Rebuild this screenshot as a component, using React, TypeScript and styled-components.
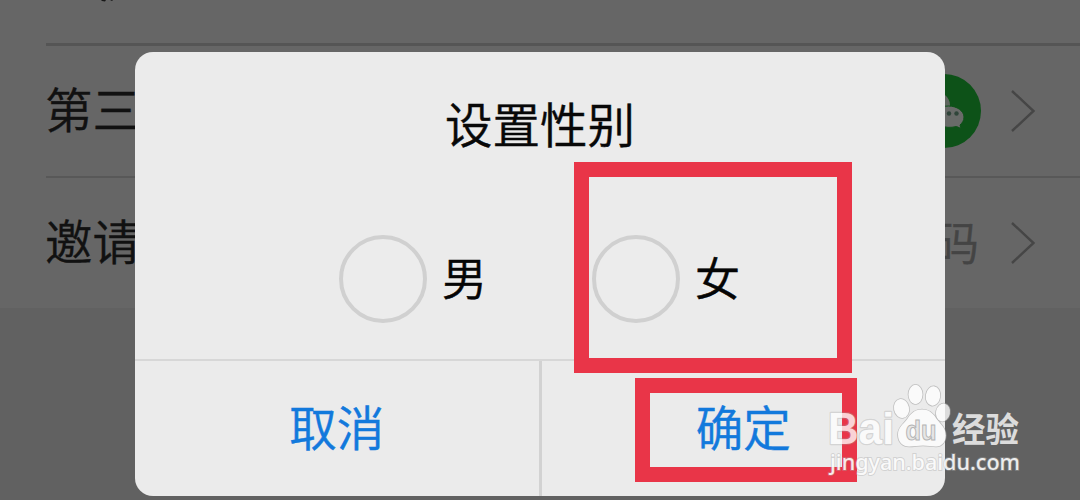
import React from "react";
import styled, { createGlobalStyle } from "styled-components";

const GlobalStyle = createGlobalStyle`
  * { box-sizing: border-box; }
  body {
    margin: 0;
    font-family: "Noto Sans CJK SC", sans-serif;
  }
`;

const Screen = styled.div`
  position: relative;
  width: 1080px;
  height: 500px;
  overflow: hidden;
  background: #616161;
`;

const SettingsList = styled.div`
  display: flex;
  flex-direction: column;
  background: #666666;
`;

const Row = styled.div<{ $height: number }>`
  display: flex;
  align-items: center;
  justify-content: space-between;
  height: ${(p) => p.$height}px;
  padding: 0 44px 0 45px;
`;

const PreviousRow = styled(Row)`
  align-items: flex-start;
  padding-left: 101px;
`;

const Divider = styled.div<{ $thickness: number; $color: string }>`
  height: ${(p) => p.$thickness}px;
  margin-left: 46px;
  background: ${(p) => p.$color};
`;

const RowLabel = styled.span`
  padding-bottom: 7px;
  font-size: 47.5px;
  line-height: 60px;
  font-weight: 350;
  -webkit-text-stroke: 0.4px currentColor;
  color: #111111;
`;

const RowValue = styled.div`
  display: flex;
  align-items: center;
  gap: 29px;
`;

const Hint = styled.span`
  padding-bottom: 6px;
  margin-right: 2px;
  font-size: 46px;
  line-height: 60px;
  font-weight: 350;
  -webkit-text-stroke: 0.5px currentColor;
  color: #444444;
`;

const Dialog = styled.section`
  position: absolute;
  top: 52px;
  left: 135px;
  display: flex;
  flex-direction: column;
  width: 810px;
  height: 444px;
  border-radius: 18px;
  background: #ebebeb;
  overflow: hidden;
`;

const DialogBody = styled.div`
  flex: 1;
  display: flex;
  flex-direction: column;
  align-items: center;
`;

const Title = styled.h1`
  margin: 35px 0 0;
  font-size: 47.5px;
  line-height: 72px;
  font-weight: 350;
  -webkit-text-stroke: 0.5px currentColor;
  color: #080808;
`;

const Options = styled.div`
  display: flex;
  align-self: stretch;
  padding: 75px 0 0 204px;
`;

const Option = styled.label`
  display: flex;
  align-items: center;
  gap: 15px;
  width: 253px;
  height: 90px;
`;

const OptionText = styled.span`
  padding-bottom: 4px;
  font-size: 45px;
  line-height: 60px;
  font-weight: 350;
  -webkit-text-stroke: 0.5px currentColor;
  color: #050505;
`;

const Radio = styled.span`
  width: 88px;
  height: 88px;
  border: 4px solid #d0d0d0;
  border-radius: 50%;
  background: #ececec;
`;

const Actions = styled.div`
  display: flex;
  height: 137px;
  border-top: 2px solid #d7d7d7;
`;

const Action = styled.button`
  flex: 1;
  padding: 0 0 7px;
  border: 0;
  background: none;
  font-family: inherit;
  font-size: 47.5px;
  font-weight: 350;
  -webkit-text-stroke: 0.5px currentColor;
  color: #1279dc;

  & + & {
    border-left: 3px solid #d2d2d2;
  }
`;

const Highlight = styled.div<{ $x: number; $y: number; $w: number; $h: number }>`
  position: absolute;
  left: ${(p) => p.$x}px;
  top: ${(p) => p.$y}px;
  width: ${(p) => p.$w}px;
  height: ${(p) => p.$h}px;
  border: 15px solid #e93548;
`;

const Watermark = styled.svg`
  position: absolute;
  left: 820px;
  top: 380px;
`;

const Chevron = () => (
  <svg width="26" height="44" viewBox="0 0 26 44" fill="none">
    <path d="M2 2 L23.5 22 L2 42" stroke="#464646" strokeWidth="2.4" />
  </svg>
);

const WeChat = () => (
  <svg width="74" height="74" viewBox="0 0 74 74">
    <circle cx="37" cy="37" r="37" fill="#0d5218" />
    <path d="M12 31c0-8 7-14 15-14s16 6 16 14-8 14-16 14l-5-1-6 4 1-6c-4-3-5-6-5-11z" fill="#5f665f" />
    <path d="M27 43c0-6 6-11 14.500-11S57 37 57 43c0 4-2 6-4 8l1 3.500-4.500-2c-12 3-22.500-2-22.500-9.500z" fill="#696b69" stroke="#0d5218" strokeWidth="1" />
    <circle cx="42" cy="39.500" r="2.200" fill="#30453a" />
    <circle cx="49.500" cy="39.500" r="2.200" fill="#30453a" />
  </svg>
);

const BaiduMark = () => (
  <Watermark width="220" height="110" viewBox="820 380 220 110">
    <g fill="#ffffff" stroke="#a0a0a0" strokeOpacity="0.75" strokeWidth="2.4" paintOrder="stroke" strokeLinejoin="round" opacity="0.78">
      <text x="828" y="444" fontFamily="Liberation Sans, sans-serif" fontWeight="700" fontSize="44" strokeOpacity="0.4" textLength="66" lengthAdjust="spacingAndGlyphs">Bai</text>
      <g strokeWidth="1.600">
        <ellipse cx="901.500" cy="408.500" rx="7.500" ry="9.500" transform="rotate(-12 901.500 408.500)" />
        <ellipse cx="915.500" cy="394.500" rx="7" ry="9.700" />
        <ellipse cx="933" cy="396" rx="7.200" ry="9.700" transform="rotate(8 933 396)" />
        <ellipse cx="943" cy="412.500" rx="7" ry="9" transform="rotate(12 943 412.500)" />
        <path d="M922 409.500c-8 0-12 5-15 10-4 5-9 8-9 15 0 8 5 12 11 12 5 0 9-1 14-1s9 1 13 1c6 0 10-5 10-11 0-7-5-11-9-16-3-5-7-10-15-10z" />
      </g>
      <text x="952" y="441.500" fontFamily="Noto Sans CJK SC, sans-serif" fontWeight="700" fontSize="34" stroke="none" textLength="67" lengthAdjust="spacingAndGlyphs">经验</text>
    </g>
    <text x="905.500" y="440" fontFamily="Liberation Sans, sans-serif" fontWeight="700" fontSize="28" fill="#e6e6e6" stroke="#b4b4b4" strokeWidth="1" textLength="31" lengthAdjust="spacingAndGlyphs">du</text>
    <text x="830" y="470" fontFamily="Noto Sans, sans-serif" fontWeight="500" fontSize="22.500" fill="#ffffff" fillOpacity="0.88" stroke="#aaaaaa" strokeOpacity="0.4" strokeWidth="1.800" paintOrder="stroke" textLength="190" lengthAdjust="spacingAndGlyphs">jingyan.baidu.com</text>
  </Watermark>
);

const PreviousLabel = () => (
  <svg width="14" height="3" viewBox="0 0 14 3">
    <path d="M0 0h5l-1 1.500-3-.5zM9 0h3l-1 1z" fill="#181818" />
  </svg>
);

export default function App() {
  return (
    <Screen>
      <GlobalStyle />
      <SettingsList>
        <PreviousRow $height={43}>
          <PreviousLabel />
        </PreviousRow>
        <Divider $thickness={3} $color="#555555" />
        <Row $height={130}>
          <RowLabel>第三</RowLabel>
          <RowValue>
            <WeChat />
            <Chevron />
          </RowValue>
        </Row>
        <Divider $thickness={2} $color="#585858" />
        <Row $height={130}>
          <RowLabel>邀请</RowLabel>
          <RowValue>
            <Hint>码</Hint>
            <Chevron />
          </RowValue>
        </Row>
      </SettingsList>

      <Dialog>
        <DialogBody>
          <Title>设置性别</Title>
          <Options>
            <Option>
              <Radio />
              <OptionText>男</OptionText>
            </Option>
            <Option>
              <Radio />
              <OptionText>女</OptionText>
            </Option>
          </Options>
        </DialogBody>
        <Actions>
          <Action>取消</Action>
          <Action>确定</Action>
        </Actions>
      </Dialog>

      <Highlight $x={574} $y={162} $w={278} $h={211} />
      <Highlight $x={635} $y={378} $w={222} $h={104} />
      <BaiduMark />
    </Screen>
  );
}
